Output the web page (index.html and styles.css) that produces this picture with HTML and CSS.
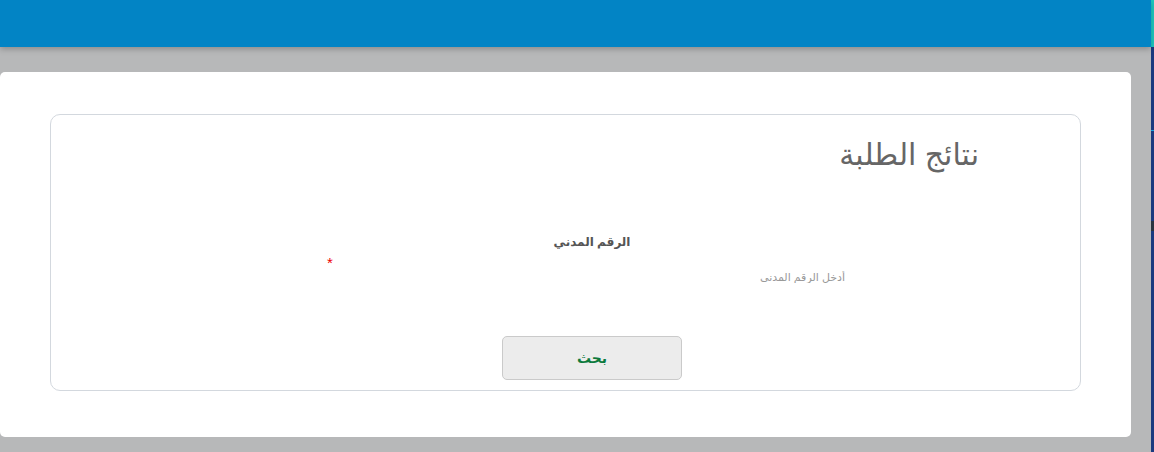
FILE: index.html
```html
<!DOCTYPE html>
<html lang="ar" dir="rtl">
<head>
<meta charset="utf-8">
<title>نتائج الطلبة</title>
<link rel="stylesheet" href="styles.css">
</head>
<body>
<div class="layout">
  <div class="page">
    <header class="topbar"></header>
    <main class="main">
      <section class="card">
        <div class="panel">
          <h1 class="title">نتائج الطلبة</h1>
          <form class="form">
            <div class="field">
              <label class="label" for="civil">الرقم المدني</label>
              <div class="input-row">
                <input class="input" id="civil" type="text" placeholder="أدخل الرقم المدني">
                <span class="req">*</span>
              </div>
            </div>
            <div class="actions">
              <button class="btn" type="button">بحث</button>
            </div>
          </form>
        </div>
      </section>
    </main>
  </div>
  <div class="edge">
    <div class="edge-top"></div>
    <div class="edge-body">
      <div class="edge-line"></div>
      <div class="edge-mark"></div>
    </div>
  </div>
</div>
</body>
</html>
```
FILE: styles.css
```css
* { box-sizing: border-box; }
html, body { margin: 0; padding: 0; height: 100%; }
body {
  background: #b7b8b9;
  font-family: "Liberation Sans", "DejaVu Sans", sans-serif;
  overflow: hidden;
}
.layout {
  display: flex;
  flex-direction: row;
  height: 452px;
  direction: ltr;
}
.page {
  flex: 1;
  display: flex;
  flex-direction: column;
}
.topbar {
  height: 47px;
  background: #0284c5;
  box-shadow: 0 2px 6px rgba(0,0,0,0.25);
  position: relative;
  z-index: 1;
}
.main {
  padding-top: 25px;
}
.card {
  width: 1131px;
  height: 365px;
  background: #fff;
  border-radius: 5px;
  padding: 42px 50px 46px 50px;
}
.panel {
  height: 277px;
  border: 1px solid #d3d8de;
  border-radius: 10px;
  direction: rtl;
  padding: 0 101px 0 0;
}
.title {
  margin: 0;
  padding-top: 22px;
  font-size: 30px;
  font-weight: normal;
  color: #666;
  line-height: 36px;
  text-align: right;
}
.form {
  width: 530px;
  margin-right: 122px;
  margin-top: 61px;
}
.field {
  display: flex;
  flex-direction: column;
  align-items: center;
}
.label {
  font-size: 12px;
  font-weight: bold;
  color: #555;
  line-height: 16px;
}
.input-row {
  width: 100%;
  display: flex;
  align-items: flex-start;
  justify-content: space-between;
  margin-top: 2px;
}
.input {
  border: none;
  outline: none;
  background: transparent;
  font-family: inherit;
  font-size: 11px;
  color: #333;
  padding: 19px 12px 0 0;
  width: 300px;
  direction: rtl;
}
.input::placeholder { color: #999; }
.req {
  color: #e00;
  font-size: 15px;
  line-height: 16px;
  padding-top: 3px;
}
.actions {
  display: flex;
  justify-content: center;
  margin-top: 53px;
}
.btn {
  width: 180px;
  height: 44px;
  background: #ececec;
  border: 1px solid #cacaca;
  border-radius: 5px;
  color: #0d7a3c;
  font-family: inherit;
  font-size: 14px;
  font-weight: bold;
}
.edge {
  width: 3px;
  display: flex;
  flex-direction: column;
}
.edge-top { height: 47px; background: #1ec8c0; }
.edge-body {
  flex: 1;
  background: #1b3a7f;
  display: flex;
  flex-direction: column;
}
.edge-line { height: 1px; margin-top: 83px; background: #1aa3e0; }
.edge-mark { height: 10px; margin-top: 90px; background: #2a3440; }
```
